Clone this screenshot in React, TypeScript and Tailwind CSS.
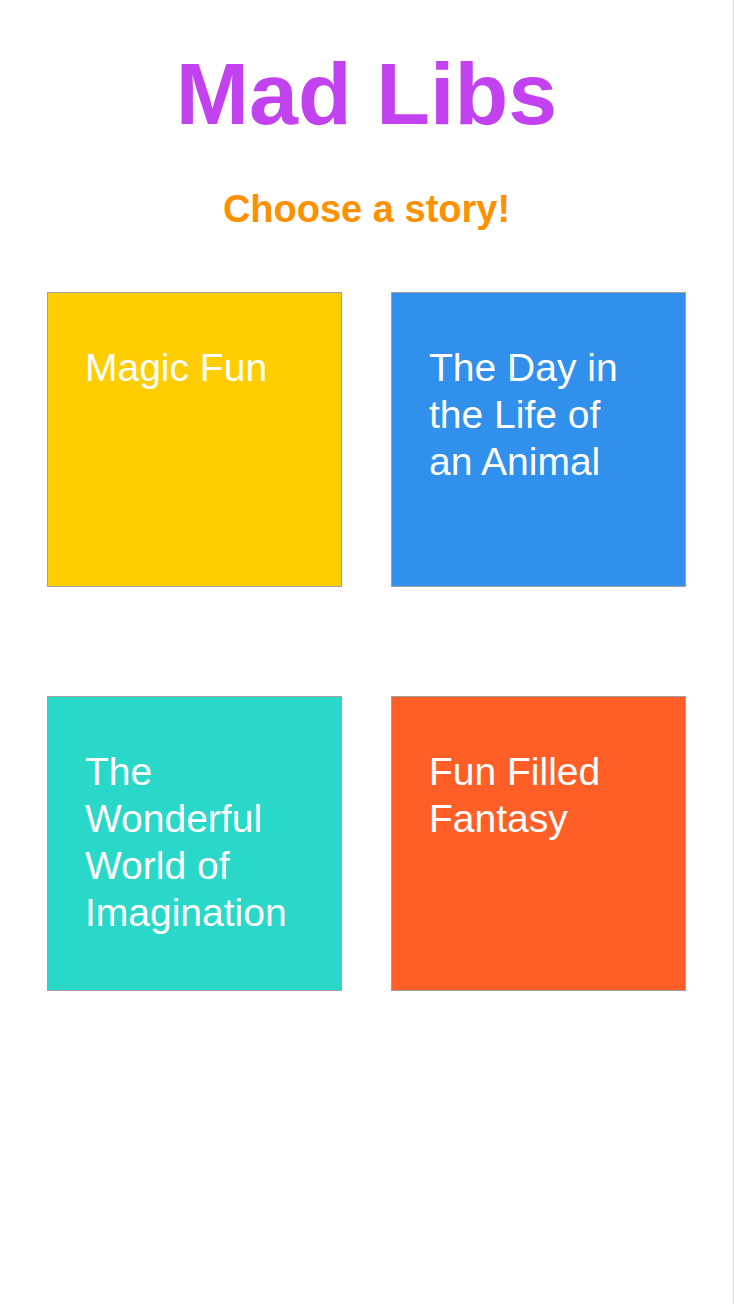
const stories = [
  { title: 'Magic Fun', color: 'bg-[#ffcd00]' },
  { title: 'The Day in the Life of an Animal', color: 'bg-[#3090ec]' },
  { title: 'The Wonderful World of Imagination', color: 'bg-[#2ad8c9]' },
  { title: 'Fun Filled Fantasy', color: 'bg-[#ff5f26]' },
];

const App = () => {
  return (
    <div className="min-h-screen w-full bg-white border-r border-[#d4d4d4] font-['Liberation_Sans',Arial,sans-serif]">
      <div className="flex flex-col items-center pt-[50px]">
        <h1 className="text-[88px] leading-[88px] font-bold text-[#c242ef]">Mad Libs</h1>
        <h2 className="mt-[52px] text-[38px] leading-[38px] font-bold text-[#ff9100]">Choose a story!</h2>
        <div className="mt-[64px] grid grid-cols-[295px_295px] gap-x-[49px] gap-y-[109px]">
          {stories.map((story) => (
            <button
              key={story.title}
              className={`${story.color} w-[295px] h-[295px] border border-[#a0a0a0] text-left flex flex-col justify-start pt-[51px] pl-[37px] pr-[44px]`}
            >
              <span className="text-white text-[39px] leading-[47px]">{story.title}</span>
            </button>
          ))}
        </div>
      </div>
    </div>
  );
};

export default App;
